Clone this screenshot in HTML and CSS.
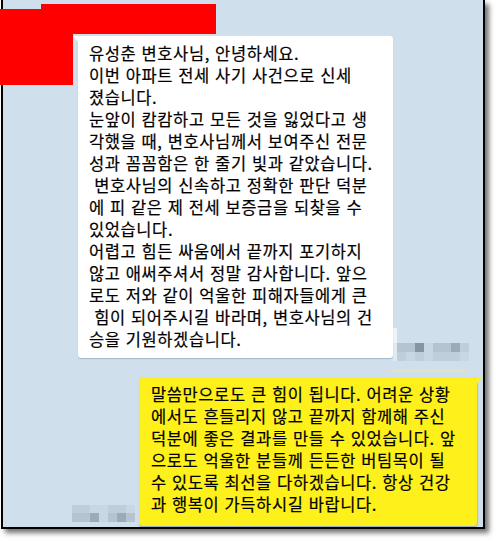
FILE: index.html
```html
<!DOCTYPE html>
<html lang="ko">
<head>
<meta charset="utf-8">
<title>대화</title>
<link rel="stylesheet" href="styles.css">
</head>
<body>
<div class="frame">
  <div class="row row-in">
    <div class="bubble bubble-white"><div class="msg">유성춘 변호사님, 안녕하세요.
이번 아파트 전세 사기 사건으로 신세
졌습니다.
눈앞이 캄캄하고 모든 것을 잃었다고 생
각했을 때, 변호사님께서 보여주신 전문
성과 꼼꼼함은 한 줄기 빛과 같았습니다.
 변호사님의 신속하고 정확한 판단 덕분
에 피 같은 제 전세 보증금을 되찾을 수
있었습니다.
어렵고 힘든 싸움에서 끝까지 포기하지
않고 애써주셔서 정말 감사합니다. 앞으
로도 저와 같이 억울한 피해자들에게 큰
 힘이 되어주시길 바라며, 변호사님의 건
승을 기원하겠습니다.</div></div>
    <div class="ts ts-in">
      <div class="strip"></div>
      <div class="blur blur-in">
        <span class="t2"></span><span class="t2"></span><span class="t4"></span><span class="t0"></span><span class="t2"></span><span class="t2"></span><span class="t3"></span><span class="t1"></span>
        <span class="t1"></span><span class="t0"></span><span class="t1"></span><span class="t0"></span><span class="t1"></span><span class="t1"></span><span class="t1"></span><span class="t0"></span>
      </div>
    </div>
  </div>
  <div class="divider"></div>
  <div class="row row-out">
    <div class="ts ts-out">
      <div class="blur blur-out">
        <span class="t1"></span><span class="t1"></span><span class="t0"></span><span class="t0"></span><span class="t1"></span><span class="t1"></span><span class="t0"></span>
        <span class="t2"></span><span class="t2"></span><span class="t3"></span><span class="t0"></span><span class="t2"></span><span class="t3"></span><span class="t2"></span>
      </div>
    </div>
    <div class="bubble bubble-yellow"><div class="msg">말씀만으로도 큰 힘이 됩니다. 어려운 상황
에서도 흔들리지 않고 끝까지 함께해 주신
덕분에 좋은 결과를 만들 수 있었습니다. 앞
으로도 억울한 분들께 든든한 버팀목이 될
수 있도록 최선을 다하겠습니다. 항상 건강
과 행복이 가득하시길 바랍니다.</div></div>
  </div>
</div>
<div class="redact redact-a"></div>
<div class="redact redact-b"></div>
</body>
</html>
```
FILE: styles.css
```css
html, body {
  margin: 0;
  padding: 0;
  background: #ffffff;
}
body {
  position: relative;
  width: 496px;
  height: 541px;
  overflow: hidden;
  font-family: "Noto Sans CJK KR", "Noto Sans", sans-serif;
}
.frame {
  margin-left: 1px;
  width: 480px;
  height: 491px;
  padding-top: 36px;
  background: #cfe0ec;
  border: 2px solid #000;
  border-top: none;
  box-shadow: 4px 4px 5px rgba(0, 0, 0, 0.55);
}
.row {
  display: flex;
}
.row-in {
  padding-left: 75px;
  align-items: flex-end;
}
.row-out {
  margin-top: 6px;
  justify-content: flex-end;
  align-items: flex-end;
  padding-right: 6px;
}
.bubble {
  position: relative;
  box-sizing: border-box;
  border-radius: 3px;
}
.bubble-white {
  width: 315px;
  height: 322px;
  padding: 6px 0 0 11px;
  background: #ffffff;
  box-shadow: 0 1px 1px rgba(90, 110, 130, 0.35);
}
.bubble-white::before {
  content: "";
  position: absolute;
  left: -5px;
  top: 0;
  width: 6px;
  height: 7px;
  background: #ffffff;
  clip-path: polygon(100% 0, 0 0, 100% 100%);
}
.bubble-yellow {
  width: 338px;
  height: 148px;
  padding: 5px 0 0 12px;
  background: #fef01b;
  box-shadow: 0 1px 1px rgba(90, 110, 130, 0.45), 1px 0 1px rgba(90, 110, 130, 0.25);
}
.bubble-yellow::after {
  content: "";
  position: absolute;
  right: -5px;
  top: 0;
  width: 6px;
  height: 7px;
  background: #fef01b;
  clip-path: polygon(0 0, 100% 0, 0 100%);
}
.msg {
  white-space: pre;
  font-size: 16.5px;
  line-height: 22px;
  letter-spacing: 0.6px;
  color: #000;
  -webkit-text-stroke: 0.2px #000;
}
.ts {
  display: flex;
  align-items: flex-end;
}
.ts-in {
  margin-bottom: -3px;
}
.ts-out {
  margin-right: 4px;
  margin-bottom: 4px;
}
.strip {
  width: 4px;
  height: 33px;
  background: linear-gradient(#eef3f7 0 45%, #e2e9ef 45% 100%);
}
.blur {
  display: grid;
}
.blur-in {
  grid-template-columns: repeat(8, 9px);
  grid-template-rows: 9px 9px;
}
.blur-out {
  grid-template-columns: repeat(7, 9px);
  grid-template-rows: 8px 9px;
}
.t0 { background: #c8d7e3; }
.t1 { background: #bfcedb; }
.t2 { background: #b5c4d0; }
.t3 { background: #9babb9; }
.t4 { background: #8595a4; }
.divider {
  margin-top: 12px;
  margin-left: 385px;
  width: 80px;
  height: 2px;
  background: #dfe4c9;
}
.redact {
  position: absolute;
  background: #ff0000;
}
.redact-a {
  left: 0;
  top: 9px;
  width: 73px;
  height: 76px;
}
.redact-b {
  left: 41px;
  top: 4px;
  width: 175px;
  height: 30px;
}
```
